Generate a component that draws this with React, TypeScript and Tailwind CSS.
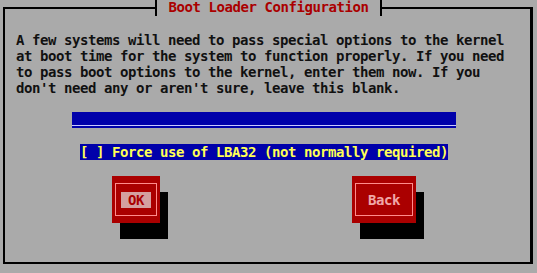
import React from "react";

const mono = { fontFamily: '"DejaVu Sans Mono", "Liberation Mono", monospace' };

export default function App() {
  return (
    <div
      style={mono}
      className="w-[537px] h-[273px] bg-[#aaaaaa] overflow-hidden text-[14px] tracking-[-0.43px] leading-[16px] font-bold"
    >
      <div className="relative ml-[3px] mt-[7px] w-[530px] h-[257px] border-2 border-black border-r-[3px] border-b-[2px] pl-[11px] pt-[23px]">
        <div className="absolute -top-[9px] left-[150px] w-[227px] h-[16px] bg-[#aaaaaa] border-x-2 border-black flex justify-center text-[#aa0000]">
          <span className="-mt-[1px]">Boot Loader Configuration</span>
        </div>

        <div className="text-[#111111] whitespace-pre">
          <p>A few systems will need to pass special options to the kernel</p>
          <p>at boot time for the system to function properly. If you need</p>
          <p>to pass boot options to the kernel, enter them now. If you</p>
          <p>don't need any or aren't sure, leave this blank.</p>
        </div>

        <div className="ml-[56px] mt-[16px] w-[384px] h-[16px] flex flex-col">
          <div className="h-[13px] bg-[#0000aa]" />
          <div className="h-px bg-[#c8c8ff]" />
          <div className="h-[2px] bg-[#0000aa]" />
        </div>

        <div className="ml-[64px] mt-[16px] w-[368px] h-[16px] bg-[#0000aa] text-[#ffff55] whitespace-pre">
          [ ] Force use of LBA32 (not normally required)
        </div>

        <div className="mt-[16px] flex">
          <div className="ml-[96px] w-[48px] h-[47px] bg-[#aa0000] shadow-[8px_16px_0_#000] p-[3px] pt-[7px]">
            <div className="h-[33px] border border-[#ff8c8c] flex items-start justify-center pt-[8px]">
              <span className="w-[30px] h-[16px] bg-[#d4a0a0] text-[#aa0000] text-center">OK</span>
            </div>
          </div>
          <div className="ml-[192px] w-[64px] h-[47px] bg-[#aa0000] shadow-[8px_16px_0_#000] p-[3px] pt-[7px]">
            <div className="h-[33px] border border-[#ff8c8c] flex items-start justify-center pt-[8px] text-[#f0a8a8]">
              Back
            </div>
          </div>
        </div>
      </div>
    </div>
  );
}
